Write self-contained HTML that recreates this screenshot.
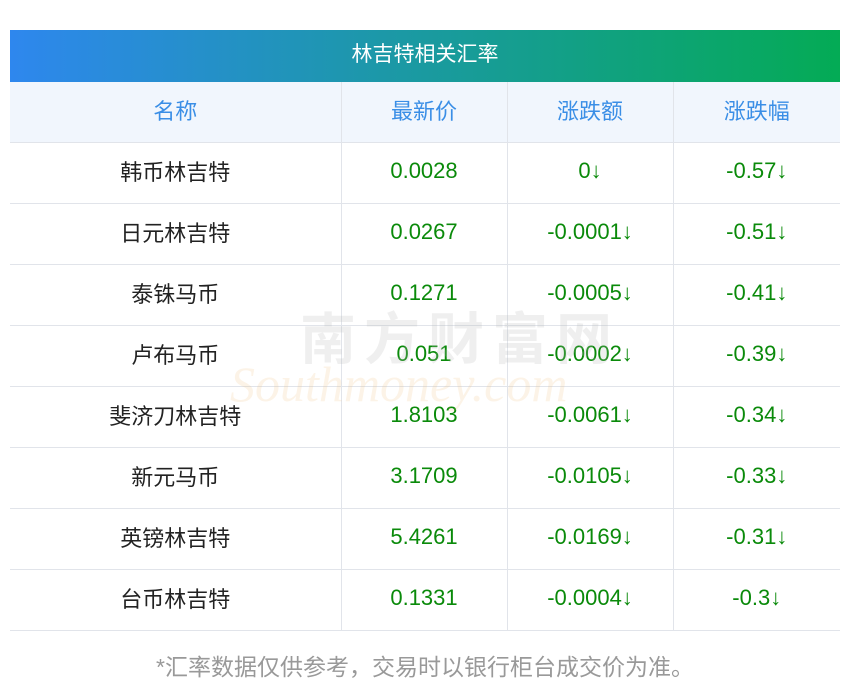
<!DOCTYPE html>
<html><head><meta charset="utf-8"><style>
*{margin:0;padding:0;box-sizing:border-box}
body{width:850px;height:697px;background:#fff;font-family:"Liberation Sans","Noto Sans CJK SC",sans-serif;position:relative;overflow:hidden}
.title{position:absolute;left:10px;top:30px;width:830px;height:52px;background:linear-gradient(90deg,#2e87ee,#1a9aa0 50%,#04ab55);color:#fff;font-size:21px;line-height:50px;text-align:center}
table{position:absolute;left:10px;top:82px;width:830px;border-collapse:collapse;table-layout:fixed}
td,th{height:61px;text-align:center;font-size:22px;font-weight:normal;border:1px solid #e1e4ea;padding:0 0 4px 0}
tr td:first-child,tr th:first-child{border-left:none}
tr td:last-child,tr th:last-child{border-right:none}
th{background:#f1f6fd;color:#3a8ee6;height:60px;border-top:none}
td{color:#222}
td.g{color:#0a8a0a}
.wm{position:absolute;left:300px;top:295px;font-size:56px;color:rgba(180,180,180,.22);letter-spacing:8px;font-weight:bold}
.wm2{position:absolute;left:230px;top:355px;font-size:50px;font-style:italic;color:rgba(240,190,120,.18);font-family:"Liberation Serif",serif}
.foot{position:absolute;top:648px;left:0;width:850px;text-align:center;color:#999;font-size:23px}
</style></head><body>
<div class="title">林吉特相关汇率</div>
<table>
<colgroup><col style="width:331px"><col style="width:166px"><col style="width:166px"><col style="width:167px"></colgroup>
<tr><th>名称</th><th>最新价</th><th>涨跌额</th><th>涨跌幅</th></tr>
<tr><td>韩币林吉特</td><td class="g">0.0028</td><td class="g">0↓</td><td class="g">-0.57↓</td></tr>
<tr><td>日元林吉特</td><td class="g">0.0267</td><td class="g">-0.0001↓</td><td class="g">-0.51↓</td></tr>
<tr><td>泰铢马币</td><td class="g">0.1271</td><td class="g">-0.0005↓</td><td class="g">-0.41↓</td></tr>
<tr><td>卢布马币</td><td class="g">0.051</td><td class="g">-0.0002↓</td><td class="g">-0.39↓</td></tr>
<tr><td>斐济刀林吉特</td><td class="g">1.8103</td><td class="g">-0.0061↓</td><td class="g">-0.34↓</td></tr>
<tr><td>新元马币</td><td class="g">3.1709</td><td class="g">-0.0105↓</td><td class="g">-0.33↓</td></tr>
<tr><td>英镑林吉特</td><td class="g">5.4261</td><td class="g">-0.0169↓</td><td class="g">-0.31↓</td></tr>
<tr><td>台币林吉特</td><td class="g">0.1331</td><td class="g">-0.0004↓</td><td class="g">-0.3↓</td></tr>
</table>
<div class="wm">南方财富网</div>
<div class="wm2">Southmoney.com</div>
<div class="foot">*汇率数据仅供参考，交易时以银行柜台成交价为准。</div>
</body></html>
